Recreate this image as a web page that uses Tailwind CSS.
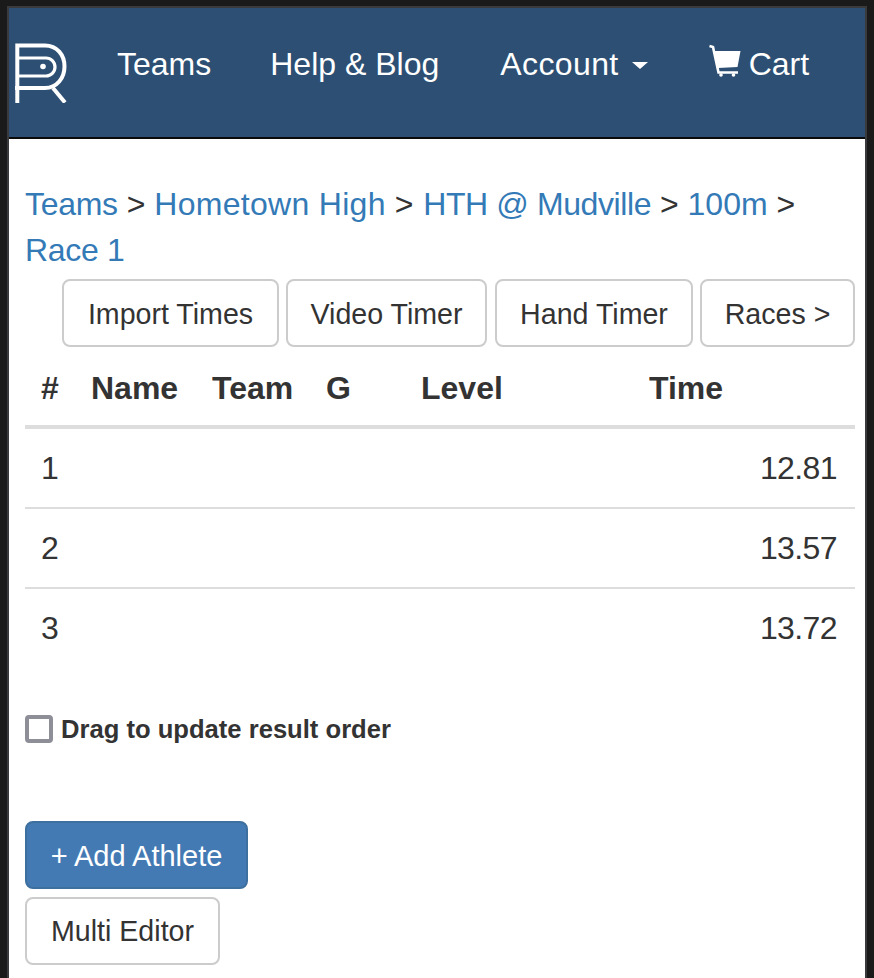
<!DOCTYPE html>
<html><head><meta charset="utf-8"><script src="https://cdn.jsdelivr.net/npm/@tailwindcss/browser@4"></script></head>
<body class="bg-[#1a1a1a] m-0">
<div class="w-[874px] h-[978px] overflow-hidden pt-[6px] font-['Liberation_Sans',sans-serif] text-[#333]">
<div class="h-[972px] ml-[7px] mr-[7px] border-x-2 border-t-2 border-[#3a3a3c] bg-white overflow-hidden">
<nav class="h-[131px] bg-[#2c4f73] border-b-2 border-[#0b0b0b] flex items-start text-white text-[32px] leading-[36px]">
<svg class="mt-[35px] ml-[6px] w-[52px] h-[60px] shrink-0" viewBox="0 0 52 60" fill="none" stroke="white" stroke-width="4"><path d="M2.300 60V2.500H30C42 2.500 49.500 12 49.500 23.500C49.500 35 42 45 30 45H0" /><path d="M2.500 15H31C36 15 40 19 40 24C40 29 36 33 31 33H2.500" stroke-width="3.200"/><circle cx="28" cy="23.500" r="2.800" fill="white" stroke="none"/><path d="M38 45L50 59.500" stroke-width="4"/></svg>
<a class="ml-[50px] mt-[38px]">Teams</a>
<a class="ml-[59px] mt-[38px]">Help &amp; Blog</a>
<a class="ml-[61px] mt-[38px] flex items-center tracking-[0.4px]">Account<span class="ml-[13px] mt-[3px] w-0 h-0 border-x-[8px] border-x-transparent border-t-[7px] border-t-white"></span></a>
<svg class="ml-[60px] mt-[36px] w-[34px] h-[34px] shrink-0" viewBox="0 0 34 34" fill="white"><path d="M6.500 7H32.500L29.500 23L10 24Z"/><path d="M1.500 2L5 3L10.500 28.500H30" fill="none" stroke="white" stroke-width="2.600"/><circle cx="13" cy="31" r="1.800"/><circle cx="25.500" cy="31" r="1.800"/></svg>
<a class="ml-[7px] mt-[38px]">Cart</a>
</nav>
<main class="px-[16px]">
<div class="pt-[42px] text-[32px] leading-[46px]">
<a class="text-[#337ab7] tracking-[-0.3px]">Teams</a> &gt; <a class="text-[#337ab7] tracking-[0.3px]">Hometown High</a> &gt; <a class="text-[#337ab7] ml-[1px] tracking-[-0.4px]">HTH @ Mudville</a> &gt; <a class="text-[#337ab7]">100m</a> &gt;<br><a class="text-[#337ab7] tracking-[-0.3px]">Race 1</a>
</div>
<div class="flex pl-[37px] mt-[6px] text-[28.600px] leading-[40px]">
<button class="shrink-0 h-[68px] w-[217px] pt-[2px] border-2 border-[#ccc] rounded-[8px]">Import Times</button>
<button class="shrink-0 ml-[7px] h-[68px] w-[201px] pt-[2px] border-2 border-[#ccc] rounded-[8px]">Video Timer</button>
<button class="shrink-0 ml-[8px] h-[68px] w-[198px] pt-[2px] border-2 border-[#ccc] rounded-[8px]">Hand Timer</button>
<button class="shrink-0 ml-[7px] h-[68px] w-[155px] pt-[2px] border-2 border-[#ccc] rounded-[8px]">Races &gt;</button>
</div>
<table class="w-[830px] table-fixed border-collapse text-[32px] mt-[4px]">
<colgroup><col class="w-[66px]"><col class="w-[121px]"><col class="w-[114px]"><col class="w-[95px]"><col class="w-[228px]"><col></colgroup>
<thead><tr class="h-[76px] border-b-4 border-[#ddd] font-bold text-left"><th class="pl-[16px]">#</th><th>Name</th><th>Team</th><th>G</th><th>Level</th><th>Time</th></tr></thead>
<tbody>
<tr class="h-[81px] border-b-2 border-[#ddd]"><td class="pl-[16px]">1</td><td></td><td></td><td></td><td></td><td class="text-right pr-[18px] tracking-[-0.6px]">12.81</td></tr>
<tr class="h-[80px] border-b-2 border-[#ddd]"><td class="pl-[16px]">2</td><td></td><td></td><td></td><td></td><td class="text-right pr-[18px] tracking-[-0.6px]">13.57</td></tr>
<tr class="h-[80px]"><td class="pb-[2px] pl-[16px]">3</td><td></td><td></td><td></td><td></td><td class="text-right pb-[2px] pr-[18px] tracking-[-0.6px]">13.72</td></tr>
</tbody></table>
<label class="flex items-center gap-[8px] mt-[46px] text-[25.600px] leading-[30px] font-bold">
<span class="w-[28px] h-[28px] border-[4px] border-[#8e8e98] rounded-[4px] bg-white"></span>Drag to update result order</label>
<button class="block mt-[77px] h-[68px] w-[223px] pt-[3px] bg-[#447ab3] border-2 border-[#3d6f9f] rounded-[8px] text-white text-[29px]">+ Add Athlete</button>
<button class="block mt-[8px] h-[68px] w-[195px] pt-[1px] border-2 border-[#ccc] rounded-[8px] text-[28.600px]">Multi Editor</button>
</main>
</div></div>
</body></html>
